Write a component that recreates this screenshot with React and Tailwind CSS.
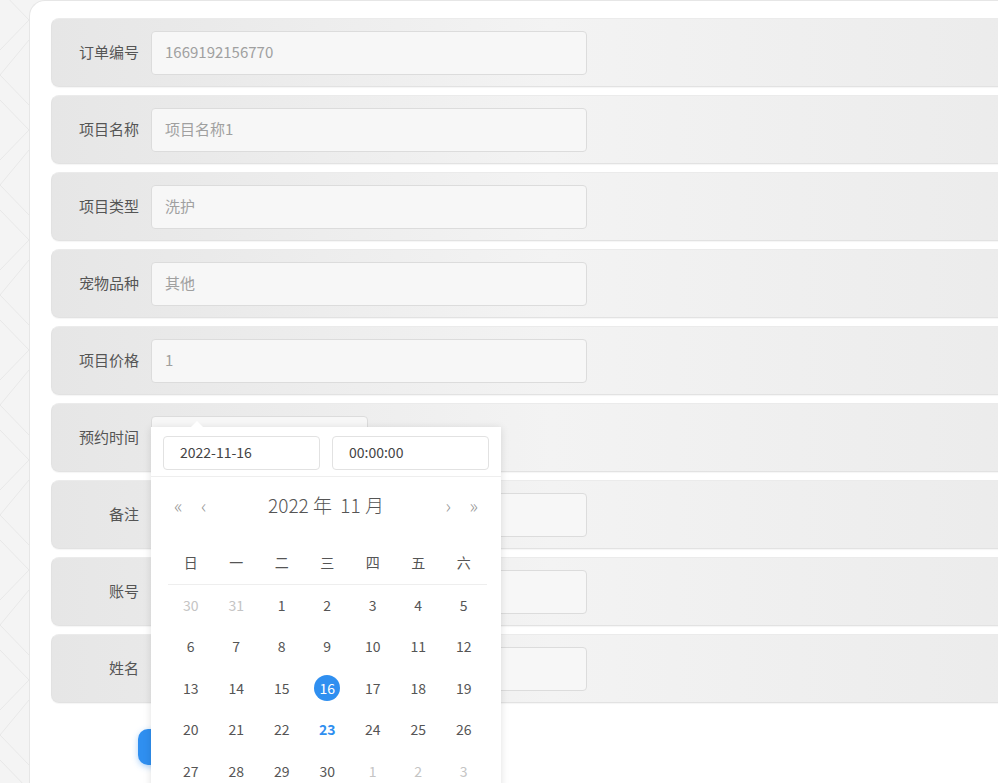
import React from 'react';

const rows = [
  { label: '订单编号', value: '1669192156770' },
  { label: '项目名称', value: '项目名称1' },
  { label: '项目类型', value: '洗护' },
  { label: '宠物品种', value: '其他' },
  { label: '项目价格', value: '1' },
  { label: '预约时间', value: '', picker: true },
  { label: '备注', value: '' },
  { label: '账号', value: '' },
  { label: '姓名', value: '' },
];

const weekDays = ['日', '一', '二', '三', '四', '五', '六'];

const weeks = [
  [[30, 'o'], [31, 'o'], [1], [2], [3], [4], [5]],
  [[6], [7], [8], [9], [10], [11], [12]],
  [[13], [14], [15], [16, 's'], [17], [18], [19]],
  [[20], [21], [22], [23, 't'], [24], [25], [26]],
  [[27], [28], [29], [30], [1, 'o'], [2, 'o'], [3, 'o']],
];

const DayCell = ({ day, kind }) => {
  if (kind === 's') {
    return (
      <div className="flex items-center justify-center">
        <span className="flex h-[26px] w-[26px] items-center justify-center rounded-full bg-[#2f8ff0] text-white">
          {day}
        </span>
      </div>
    );
  }
  return (
    <div
      className={`flex items-center justify-center ${
        kind === 'o' ? 'text-[#c4c4c4]' : kind === 't' ? 'font-bold text-[#2f8ff0]' : 'text-[#555]'
      }`}
    >
      {day}
    </div>
  );
};

const DatePicker = () => (
  <div className="absolute left-0 top-[11px] z-20 w-[350px] bg-white shadow-[0_1px_8px_rgba(0,0,0,0.12)]">
    {/* little arrow */}
    <div className="absolute -top-[6px] left-[39px] h-0 w-0 border-x-[7px] border-b-[7px] border-x-transparent border-b-white" />
    <div className="flex gap-[12px] border-b border-[#eee] px-[12px] pb-[6px] pt-[9px]">
      <div className="flex h-[34px] w-[157px] items-center rounded-[4px] border border-[#e2e2e2] pl-[16px] text-[14px] text-[#444]">
        2022-11-16
      </div>
      <div className="flex h-[34px] w-[157px] items-center rounded-[4px] border border-[#e2e2e2] pl-[16px] text-[14px] text-[#444]">
        00:00:00
      </div>
    </div>
    <div className="relative flex h-[57px] items-center justify-center text-[19px] font-light text-[#555]">
      <span className="absolute left-[23px] text-[19px] text-[#999]">«</span>
      <span className="absolute left-[50px] text-[19px] text-[#999]">‹</span>
      <span>2022 年&nbsp; 11 月</span>
      <span className="absolute right-[50px] text-[19px] text-[#999]">›</span>
      <span className="absolute right-[23px] text-[19px] text-[#999]">»</span>
    </div>
    <div className="pl-[17px] pr-[14.5px] pt-[8px] text-[14px]">
      <div className="grid h-[43px] grid-cols-7 border-b border-[#eee] text-[#555]">
        {weekDays.map((d) => (
          <div key={d} className="flex items-center justify-center">{d}</div>
        ))}
      </div>
      {weeks.map((w, i) => (
        <div key={i} className="grid h-[41.5px] grid-cols-7">
          {w.map(([day, kind], j) => (
            <DayCell key={j} day={day} kind={kind} />
          ))}
        </div>
      ))}
    </div>
  </div>
);

const FormRow = ({ label, value, picker }) => (
  <div className="flex h-[69px] w-[1000px] items-center rounded-l-[8px] border border-[#e2e2e2] border-t-[#ebebeb] bg-gradient-to-r from-[#e6e6e6] via-[#f3f3f3] to-[#ebebeb] shadow-[0_1px_1px_rgba(0,0,0,0.04)]">
    <div className="w-[87px] text-right text-[15px] text-[#555]">{label}</div>
    {picker ? (
      <div className="relative ml-[12px] h-[44px] w-[217px]">
        <div className="h-full w-full rounded-[4px] border border-[#dcdcdc] bg-[#f7f7f7]" />
        <DatePicker />
      </div>
    ) : (
      <div className="ml-[12px] flex h-[44px] w-[436px] items-center rounded-[4px] border border-[#dcdcdc] bg-[#f7f7f7] pl-[13px] text-[15px] text-[#a0a0a0]">
        {value}
      </div>
    )}
  </div>
);

const Zigzag = () => (
  <svg width="29" height="783" viewBox="0 0 29 783" className="block">
    {Array.from({ length: 8 }).map((_, i) => {
      const y = i * 110 - 20;
      return (
        <g key={i} stroke="#e8e8e8" strokeWidth="1" fill="none">
          <polyline points={`0,${y + 10} 29,${y + 40} 0,${y + 70}`} />
          <polyline points={`29,${y + 60} 0,${y + 95} 29,${y + 125}`} />
        </g>
      );
    })}
  </svg>
);

export default function App() {
  return (
    <div className="flex h-[783px] w-[998px] overflow-hidden bg-[#f4f4f4] font-['Microsoft_YaHei','Noto_Sans_CJK_SC',sans-serif]">
      <div className="w-[29px] shrink-0">
        <Zigzag />
      </div>
      <div className="relative flex-1 overflow-hidden rounded-tl-[16px] border-l border-t border-[#e6e6e6] bg-white pl-[21px] pt-[17px]">
        <div className="flex flex-col gap-[8px]">
          {rows.map((r) => (
            <FormRow key={r.label} {...r} />
          ))}
        </div>
        <div className="ml-[87px] mt-[26px]">
          {/* submit button, mostly hidden behind the open date picker */}
          <button
            aria-label="提交"
            className="h-[36px] w-[120px] rounded-[10px] bg-[#2f8ff0] shadow-[0_2px_6px_rgba(47,143,240,0.4)]"
          />
        </div>
      </div>
    </div>
  );
}
